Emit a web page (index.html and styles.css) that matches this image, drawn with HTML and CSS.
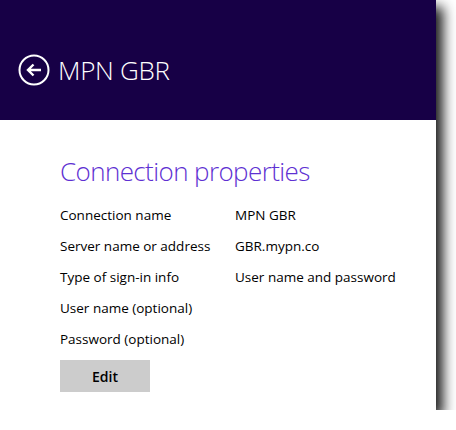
FILE: index.html
```html
<!DOCTYPE html>
<html>
<head>
<meta charset="utf-8">
<link rel="stylesheet" href="styles.css">
</head>
<body>
<div class="window">
  <header class="header">
    <svg class="back" width="32" height="32" viewBox="0 0 32 32">
      <circle cx="16" cy="16" r="14.5" fill="none" stroke="#fff" stroke-width="2"/>
      <path d="M23 16H10M15.5 10.5L10 16l5.5 5.5" fill="none" stroke="#fff" stroke-width="2.4"/>
    </svg>
    <h1 class="app-title">MPN GBR</h1>
  </header>
  <main class="content">
    <h2 class="section-title">Connection properties</h2>
    <div class="props">
      <div class="label">Connection name</div><div class="value">MPN GBR</div>
      <div class="label">Server name or address</div><div class="value">GBR.mypn.co</div>
      <div class="label">Type of sign-in info</div><div class="value">User name and password</div>
      <div class="label">User name (optional)</div><div class="value"></div>
      <div class="label">Password (optional)</div><div class="value"></div>
    </div>
    <button class="edit">Edit</button>
  </main>
</div>
</body>
</html>
```
FILE: styles.css
```css
html, body {
  margin: 0;
  padding: 0;
  background: #fff;
}
body {
  font-family: "Open Sans", "Noto Sans", sans-serif;
}
.window {
  width: 436px;
  height: 410px;
  background: #fff;
  box-shadow: 7px 7px 12px rgba(0, 0, 0, 0.9);
}
.header {
  height: 120px;
  background: #170046;
  display: flex;
  align-items: center;
  padding: 20px 0 0 18px;
  box-sizing: border-box;
  gap: 8px;
}
.back {
  display: block;
}
.app-title {
  margin: 0;
  color: #fff;
  font-weight: 300;
  font-size: 26px;
  letter-spacing: -0.3px;
}
.content {
  padding: 33px 0 0 60px;
}
.section-title {
  margin: 0;
  color: #5e30d2;
  font-weight: 300;
  font-size: 26px;
  line-height: 36px;
  letter-spacing: -0.6px;
}
.props {
  display: grid;
  grid-template-columns: 175px auto;
  grid-auto-rows: 31px;
  margin-top: 11px;
  font-size: 13.5px;
  color: #000;
}
.label, .value {
  line-height: 31px;
}
.edit {
  margin-top: 5px;
  width: 90px;
  height: 32px;
  border: none;
  background: #cccccc;
  font-family: "Open Sans", "Noto Sans", sans-serif;
  font-size: 14px;
  font-weight: 600;
  color: #000;
  padding: 0;
}
```
